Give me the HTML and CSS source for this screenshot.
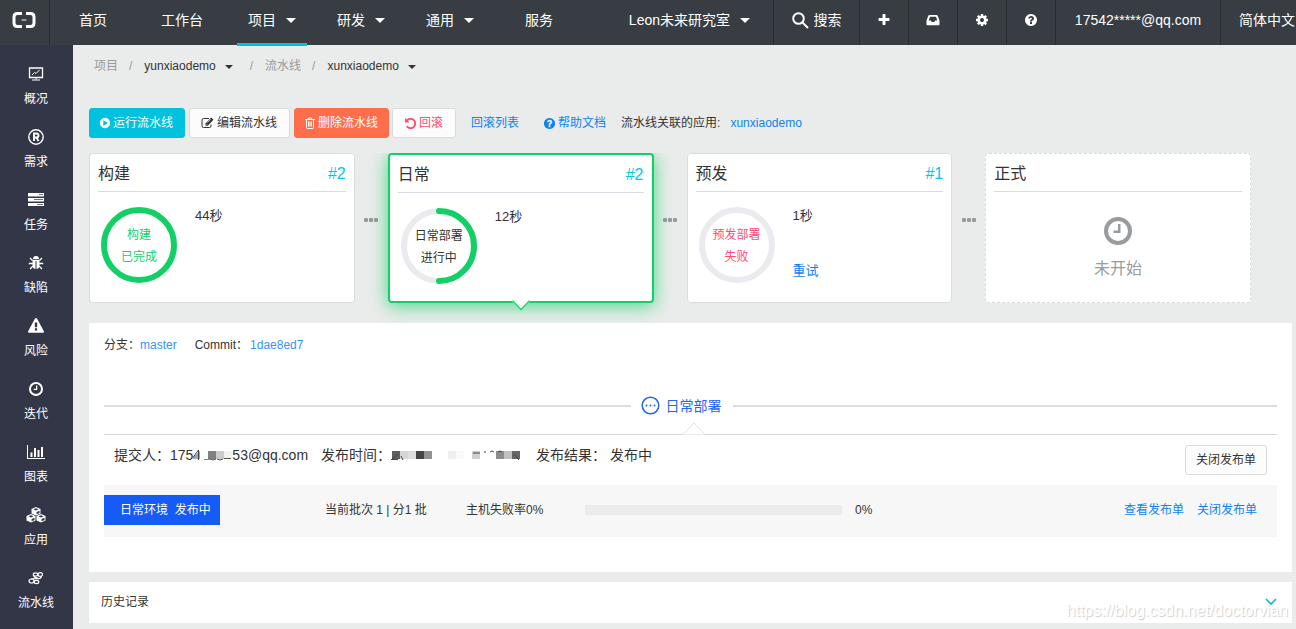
FILE: index.html
```html
<!DOCTYPE html>
<html lang="zh-CN">
<head>
<meta charset="utf-8">
<title>xunxiaodemo - 流水线</title>
<link rel="stylesheet" href="styles.css">
</head>
<body>
<svg class="defs" aria-hidden="true">
  <symbol id="i-question" viewBox="0 0 1792 1792"><path d="M1024 1376v-192q0-14-9-23t-23-9h-192q-14 0-23 9t-9 23v192q0 14 9 23t23 9h192q14 0 23-9t9-23zm256-672q0-88-55.5-163t-138.5-116-170-41q-243 0-371 213-15 24 8 42l132 100q7 6 19 6 16 0 25-12 53-68 86-92 34-24 86-24 48 0 85.5 26t37.5 59q0 38-20 61t-68 45q-63 28-115.5 86.5t-52.5 125.5v36q0 14 9 23t23 9h192q14 0 23-9t9-23q0-19 21.5-49.5t54.5-49.5q32-18 49-28.5t46-35 44.5-48 28-60.5 12.5-81zm384 192q0 209-103 385.5t-279.5 279.5-385.5 103-385.5-103-279.5-279.5-103-385.5 103-385.5 279.5-279.5 385.5-103 385.5 103 279.5 279.5 103 385.5z"/></symbol>
  <symbol id="i-clock" viewBox="0 0 28 28"><path fill-rule="evenodd" d="M14 0a14 14 0 1 0 0 28a14 14 0 1 0 0-28zM14 4a10 10 0 1 1 0 20a10 10 0 1 1 0-20z"/><path d="M14 7h2.500v9h-7v-2.500H14z"/></symbol>
</svg>

<header class="topbar">
  <a class="logo" href="#" aria-label="云效">
    <svg width="24" height="16" viewBox="0 0 24 16"><path fill="none" stroke="#fff" stroke-width="3" d="M10 1.500H5.500Q2 1.500 2 5v6q0 3.500 3.500 3.500H10M14 1.500h4.500Q22 1.500 22 5v6q0 3.500-3.500 3.500H14"/><path fill="#fff" d="M9.500 7.500h5v1h-5z"/></svg>
  </a>
  <nav class="nav">
    <a href="#">首页</a>
    <a href="#" class="nav-work">工作台</a>
    <a href="#" class="nav-project active">项目<i class="caret"></i></a>
    <a href="#" class="nav-group">研发<i class="caret"></i></a>
    <a href="#" class="nav-group">通用<i class="caret"></i></a>
    <a href="#" class="nav-service">服务</a>
  </nav>
  <div class="tools">
    <a href="#" class="org">Leon未来研究室<i class="caret"></i></a>
    <a href="#" class="tool search"><svg width="17" height="17" viewBox="0 0 17 17"><g fill="none" stroke="#fff" stroke-width="2"><circle cx="6.500" cy="6.500" r="5.300"/><path d="M10.500 10.500l5.500 5.500"/></g></svg>搜索</a>
    <a href="#" class="tool" aria-label="新建"><svg width="14" height="14" viewBox="0 0 1792 1792"><path fill="#fff" d="M1600 736v192q0 40-28 68t-68 28h-416v416q0 40-28 68t-68 28h-192q-40 0-68-28t-28-68v-416h-416q-40 0-68-28t-28-68v-192q0-40 28-68t68-28h416v-416q0-40 28-68t68-28h192q40 0 68 28t28 68v416h416q40 0 68 28t28 68z"/></svg></a>
    <a href="#" class="tool" aria-label="收件箱"><svg width="14" height="14" viewBox="0 0 14 14"><path fill="#fff" fill-rule="evenodd" d="M3.500 2h7q.9 0 1.200.7L13.500 7.500v4q0 .8-.8.800H1.300q-.8 0-.8-.8v-4L2.300 2.700Q2.600 2 3.500 2zM4 3.700L2.700 7.500h2.200l.8 1.500h2.600l.8-1.500h2.200L10 3.700z"/></svg></a>
    <a href="#" class="tool" aria-label="设置"><svg width="14" height="14" viewBox="0 0 1792 1792"><path fill="#fff" d="M1152 896q0-106-75-181t-181-75-181 75-75 181 75 181 181 75 181-75 75-181zm512-109v222q0 12-8 23t-20 13l-185 28q-19 54-39 91 35 50 107 138 10 12 10 25t-9 23q-27 37-99 108t-94 71q-12 0-26-9l-138-108q-44 23-91 38-16 136-29 186-7 28-36 28h-222q-14 0-24.500-8.500t-11.500-21.500l-28-184q-49-16-90-37l-141 107q-10 9-25 9-14 0-25-11-126-114-165-168-7-10-7-23 0-12 8-23 15-21 51-66.500t54-70.500q-27-50-41-99l-183-27q-13-2-21-12.500t-8-23.500v-222q0-12 8-23t19-13l186-28q14-46 39-92-40-57-107-138-10-12-10-24 0-10 9-23 26-36 98.500-107.500t94.500-71.500q13 0 26 10l138 107q44-23 91-38 16-136 29-186 7-28 36-28h222q14 0 24.500 8.500t11.500 21.500l28 184q49 16 90 37l142-107q9-9 24-9 13 0 25 10 129 119 165 170 7 8 7 22 0 12-8 23-15 21-51 66.500t-54 70.500q26 50 41 98l183 28q13 2 21 12.500t8 23.500z"/></svg></a>
    <a href="#" class="tool" aria-label="帮助"><svg width="14" height="14" fill="#fff"><use href="#i-question"/></svg></a>
    <a href="#" class="tool account">17542*****@qq.com</a>
    <a href="#" class="tool lang">简体中文</a>
  </div>
</header>

<div class="shell">
  <aside class="side">
    <a href="#"><span class="ico"><svg width="16" height="16" viewBox="0 0 16 16" fill="none" stroke="#fff"><path d="M1.500 2h13v9.500h-13z" stroke-width="1.300"/><path d="M4 9l2.500-2.500 1.500 1 3.500-3.500M8 11.500v2M4 14h8"/></svg></span>概况</a>
    <a href="#"><span class="ico"><svg width="16" height="16" viewBox="0 0 16 16" fill="none" stroke="#fff"><circle cx="8" cy="8" r="7.200" stroke-width="1.400"/><path d="M6 12V4.500h2.500a2 2 0 0 1 0 4H6M8.500 8.500l2 3.500" stroke-width="1.900"/></svg></span>需求</a>
    <a href="#"><span class="ico"><svg width="16" height="14" viewBox="0 0 16 14"><path fill="#fff" d="M0 0h16v3.500H0zM0 5h16v3.500H0zM0 10h16v3H0z"/><path fill="#333646" d="M11 1h4v1h-4zM6 6h9v1H6zM9 11h6v1H9z" opacity=".7"/></svg></span>任务</a>
    <a href="#"><span class="ico"><svg width="16" height="16" viewBox="0 0 16 16"><path fill="#fff" d="M5 4q0-3 3-3t3 3zM4.500 4.800h7V10q0 4-3.500 4t-3.500-4z"/><path d="M2 3l2.500 2.500M14 3l-2.500 2.500M.8 8.500h4M15.200 8.500h-4M2 14l3-3M14 14l-3-3" stroke="#fff" stroke-width="1.300"/><path d="M8 6v8" stroke="#333646"/></svg></span>缺陷</a>
    <a href="#"><span class="ico"><svg width="16" height="16" viewBox="0 0 1792 1792"><path fill="#fff" d="M1024 1375v-190q0-14-9.500-23.500t-22.500-9.500h-192q-13 0-22.500 9.500t-9.500 23.500v190q0 14 9.500 23.500t22.500 9.500h192q13 0 22.500-9.500t9.500-23.500zm-2-374l18-459q0-12-10-19-13-11-24-11h-220q-11 0-24 11-10 7-10 21l17 457q0 10 10 16.500t24 6.500h185q14 0 23.500-6.500t10.500-16.500zm-14-934l768 1408q35 63-2 126-17 29-46.500 46t-63.500 17h-1536q-34 0-63.500-17t-46.500-46q-37-63-2-126l768-1408q17-31 47-49t65-18 65 18 47 49z"/></svg></span>风险</a>
    <a href="#"><span class="ico"><svg width="14" height="14" fill="#fff"><use href="#i-clock"/></svg></span>迭代</a>
    <a href="#"><span class="ico"><svg width="18" height="16" viewBox="0 0 18 16" fill="#fff"><path d="M0 1h1v13h17v1H0zM3.500 8.500h2V13h-2zM7 4h2v9H7zM10.500 6h2v7h-2zM14 3h2v10h-2z"/></svg></span>图表</a>
    <a href="#"><span class="ico"><svg width="20" height="16" viewBox="0 0 20 16"><g fill="#fff"><path d="M10 0l4.500 2v4.500L10 8.500l-4.500-2V2zM5 7l4.500 2v4.500L5 15.500l-4.500-2V9zM15 7l4.500 2v4.500L15 15.500l-4.500-2V9z"/></g><g fill="#333646"><path d="M7.500 2.300L10 1.300l2.500 1L10 3.400zM2.500 9.300L5 8.300l2.500 1L5 10.400zM12.500 9.300l2.500-1 2.500 1-2.500 1.100zM10.600 5l2.900-1.300v2.200l-2.900 1.300zM5.600 12l2.900-1.300v2.200l-2.900 1.300zM15.600 12l2.900-1.300v2.200l-2.900 1.300z"/></g></svg></span>应用</a>
    <a href="#"><span class="ico"><svg width="16" height="16" viewBox="0 0 16 16" fill="none" stroke="#fff" stroke-width="1.200"><ellipse cx="7.500" cy="4.500" rx="2.200" ry="1.600"/><ellipse cx="12.300" cy="4.500" rx="2.200" ry="1.900"/><ellipse cx="3.500" cy="11" rx="2.500" ry="2"/><ellipse cx="8.500" cy="12" rx="2.300" ry="1.600"/><path d="M13.500 6.500q-1 3-6.500 2l-4 .5M6 6q0 2 4 2"/></svg></span>流水线</a>
  </aside>

  <main class="main">
    <nav class="crumbs">
      <a href="#">项目</a><span class="sep">/</span><a href="#" class="cur">yunxiaodemo<i class="caret small"></i></a><span class="sep wide">/</span><a href="#">流水线</a><span class="sep">/</span><a href="#" class="cur">xunxiaodemo<i class="caret small"></i></a>
    </nav>

    <div class="actions">
      <button class="btn run"><svg width="12" height="12" viewBox="0 0 1792 1792"><path fill="#fff" d="M896 128q209 0 385.500 103t279.500 279.500 103 385.500-103 385.500-279.500 279.500-385.500 103-385.500-103-279.500-279.500-103-385.500 103-385.500 279.500-279.500 385.500-103zm384 823q32-18 32-55t-32-55l-544-320q-31-19-64-1-32 19-32 56v640q0 37 32 56 16 8 32 8 17 0 32-9z"/></svg>运行流水线</button>
      <button class="btn edit"><svg width="13" height="12" viewBox="0 0 13 12"><path d="M8 1.500H2.500q-1.500 0-1.500 1.500v6q0 1.500 1.500 1.500h6q1.500 0 1.500-1.500V7.500" fill="none" stroke="#333"/><path fill="#333" d="M4.500 8.700V6.400L10.300.6l2.200 2.200-5.800 5.900z"/><path d="M5.200 6.800l1.200 1.200M6.500 5.500l3.200-3.200" stroke="#fff" stroke-width=".6"/></svg>编辑流水线</button>
      <button class="btn del"><svg width="10" height="12" viewBox="0 0 10 12" fill="none" stroke="#fff"><path d="M0 2.500h10M3 2.500L3.500 1h3L7 2.500M1.500 2.500v8q0 1 1 1h5q1 0 1-1v-8M3.500 4.500v5M5 4.500v5M6.500 4.500v5"/></svg>删除流水线</button>
      <button class="btn back"><svg width="13" height="13" viewBox="0 0 1792 1792"><path fill="#ff4c72" d="M1664 896q0 156-61 298t-164 245-245 164-298 61q-172 0-327-72.500t-264-204.500q-7-10-6.500-22.500t8.500-20.500l137-138q10-9 25-9 16 2 23 12 73 95 179 147t225 52q104 0 198.500-40.500t163.500-109.500 109.500-163.500 40.500-198.500-40.500-198.500-109.500-163.500-163.500-109.500-198.500-40.500q-98 0-188 35.500t-160 101.500l137 138q31 30 14 69-17 40-59 40h-448q-26 0-45-19t-19-45v-448q0-42 40-59 39-17 69 14l130 129q107-101 244.500-156.500t284.500-55.500q156 0 298 61t245 164 164 245 61 298z"/></svg>回滚</button>
      <a href="#" class="rollbacks">回滚列表</a>
      <a href="#" class="docs"><svg width="13" height="13" fill="#0c83f2"><use href="#i-question"/></svg>帮助文档</a>
      <span class="related">流水线关联的应用:</span>
      <a href="#">xunxiaodemo</a>
    </div>

    <section class="stages">
      <article class="stage">
        <div class="stage-head"><h2>构建</h2><a href="#">#2</a></div>
        <div class="stage-body">
          <div class="ring ok"><svg viewBox="0 0 76 76"><circle cx="38" cy="38" r="35"/></svg><div class="ring-text">构建<br>已完成</div></div>
          <div class="info"><span>44秒</span></div>
        </div>
      </article>
      <div class="link"><i></i><i></i><i></i></div>
      <article class="stage current">
        <div class="stage-head"><h2>日常</h2><a href="#">#2</a></div>
        <div class="stage-body">
          <div class="ring"><svg viewBox="0 0 76 76"><circle cx="38" cy="38" r="35"/><path d="M38 3a35 35 0 0 1 0 70"/></svg><div class="ring-text">日常部署<br>进行中</div></div>
          <div class="info"><span>12秒</span></div>
        </div>
        <svg class="tip" width="18" height="11" viewBox="0 0 18 11"><path d="M0 0h18v2h-1L9 10 1 2H0z" fill="#fff"/><path d="M0 1h1l8 8.500L17 1h1" fill="none" stroke="#13d066" stroke-width="1.200"/></svg>
      </article>
      <div class="link"><i></i><i></i><i></i></div>
      <article class="stage">
        <div class="stage-head"><h2>预发</h2><a href="#">#1</a></div>
        <div class="stage-body">
          <div class="ring fail"><svg viewBox="0 0 76 76"><circle cx="38" cy="38" r="35"/></svg><div class="ring-text">预发部署<br>失败</div></div>
          <div class="info"><span>1秒</span><a href="#">重试</a></div>
        </div>
      </article>
      <div class="link"><i></i><i></i><i></i></div>
      <article class="stage pending">
        <div class="stage-head"><h2>正式</h2></div>
        <div class="stage-wait"><svg width="28" height="28" fill="#989c9f"><use href="#i-clock"/></svg><span>未开始</span></div>
      </article>
    </section>

    <section class="panel">
      <div class="source">分支：<a href="#">master</a><span class="commit">Commit：</span><a href="#">1dae8ed7</a></div>
      <div class="divider"><span><svg width="19" height="19" viewBox="0 0 19 19"><circle cx="9.500" cy="9.500" r="8.300" fill="none" stroke="#2466ef" stroke-width="1.500"/><g fill="#2466ef"><circle cx="5.500" cy="9.500" r="1"/><circle cx="9.500" cy="9.500" r="1"/><circle cx="13.500" cy="9.500" r="1"/></g></svg>日常部署</span></div>
      <div class="order">
        <svg class="notch" width="22" height="13" viewBox="0 0 22 13"><path d="M0 12.500L11 1l11 11.500" fill="#fff" stroke="#e3e3e6"/></svg>
        <div class="meta">
          <span>提交人：175<svg class="mask" width="39" height="12" viewBox="0 0 39 12"><path fill="#a6a6a6" d="M0 7l7-6v8H0z"/><path fill="none" stroke="#444" d="M0 7.500L5.500 0v10"/><path fill="#888" d="M11 9h6v1h-6z"/><path fill="#808080" d="M15 1h8v8h-8z"/><path fill="#ccc" d="M23 1h8v8h-8z"/><path fill="#f2f2f2" d="M31 1h8v8h-8z"/><path fill="none" stroke="#555" d="M17 9q3 2 6 0M24 9q3 2 6 0M31 8.500h7"/></svg>53@qq.com</span>
          <span>发布时间：<svg class="mask" width="132" height="12" viewBox="0 0 132 12"><path fill="#606060" d="M1 1h8v8H1z"/><path fill="#d6d6d6" d="M9 1h8v8H9z"/><path fill="#dedede" d="M17 1h8v8h-8z"/><path fill="#454545" d="M25 1h8v8h-8z"/><path fill="#929292" d="M33 1h8v8h-8z"/><path fill="#eee" d="M57 1h8v8h-8z"/><path fill="#f9f9f9" d="M65 1h8v8h-8z"/><path fill="#d0d0d0" d="M81 1h8v8h-8z"/><path fill="#8c8c8c" d="M105 1h8v8h-8z"/><path fill="#c0c0c0" d="M113 1h8v8h-8z"/><path fill="#666" d="M121 1h8v8h-8z"/><path fill="none" stroke="#444" d="M0 9.500h7M1 9l6-5M10 6l2 4M82 3h7M93 2h2M99 2q2-2 4 0M107 2q2-2 4 0M123 4l5 6"/></svg></span>
          <span class="result">发布结果： 发布中</span>
          <button class="btn close">关闭发布单</button>
        </div>
        <div class="batch">
          <span class="env">日常环境&nbsp; 发布中</span>
          <span class="step">当前批次 1 | 分1 批</span>
          <span class="rate">主机失败率0%</span>
          <div class="bar"></div>
          <span class="pct">0%</span>
          <a href="#">查看发布单</a>
          <a href="#">关闭发布单</a>
        </div>
      </div>
    </section>

    <section class="history">
      <span>历史记录</span>
      <button class="toggle" aria-label="展开"><svg width="12" height="8" viewBox="0 0 12 8"><path d="M1 1l5 5 5-5" fill="none" stroke="#0fbad2" stroke-width="1.700"/></svg></button>
    </section>
  </main>
</div>
<div class="watermark">https://blog.csdn.net/doctorvian</div>
</body>
</html>
```

FILE: styles.css
```css
* { box-sizing: border-box; }

body {
  margin: 0;
  min-height: 100vh;
  display: flex;
  flex-direction: column;
  overflow: hidden;
  background: #eaeceb;
  color: #333;
  font: 12px/18px "Liberation Sans", "Noto Sans CJK SC", sans-serif;
}

a { color: #0c83f2; text-decoration: none; }
svg { flex: none; }
.defs { display: none; }

/* top bar */
.topbar {
  display: flex;
  height: 45px;
  flex: none;
  background: #373d43;
  font-size: 14px;
  line-height: 40px;
}
.topbar a { color: #fff; white-space: nowrap; }
.logo {
  width: 50px;
  flex: none;
  display: flex;
  justify-content: center;
  padding: 12px 2px 0 0;
  border-right: 1px solid #282c31;
}
.nav { display: flex; padding-left: 18px; }
.nav a, .org {
  display: flex;
  align-items: center;
  height: 40px;
  padding: 0 11px;
}
.nav-work { margin-left: 32px; }
.nav-project { margin-left: 23px; }
.nav-group { margin-left: 19px; }
.nav-service { margin-left: 29px; }
.nav .active {
  position: relative;
}
.nav .active::after {
  content: "";
  position: absolute;
  left: 0;
  right: 0;
  top: 43px;
  height: 3px;
  background: #00c1de;
}
.caret {
  display: inline-block;
  margin-left: 10px;
  border: 5px solid transparent;
  border-top-color: currentColor;
  border-bottom: 0;
}
.caret.small {
  margin-left: 9px;
  border-width: 4px 4px 0;
  vertical-align: 1px;
}
.tools { display: flex; margin-left: auto; }
.org { margin-right: 12px; }
.tool {
  display: flex;
  justify-content: center;
  align-items: center;
  width: 49px;
  padding-bottom: 5px;
  border-left: 1px solid #282c31;
}
.tool.search { width: 86px; gap: 5px; }
.tool.account { width: 165px; }
.tool.lang { width: 76px; padding-left: 18px; justify-content: flex-start; }

/* side menu */
.shell { display: flex; flex: 1; }
.side {
  width: 73px;
  flex: none;
  padding-top: 17px;
  background: #333646;
}
.side a {
  display: flex;
  flex-direction: column;
  align-items: center;
  height: 63px;
  padding-right: 1px;
  color: #fff;
}
.ico {
  height: 28px;
  padding-bottom: 5px;
  display: flex;
  align-items: center;
}

/* content */
.main { flex: 1; min-width: 0; padding: 12px 4px 6px 16px; }
.crumbs { display: flex; padding-left: 5px; }
.crumbs a { color: #999; }
.crumbs .cur { color: #333; }
.sep { margin: 0 12px 0 11px; color: #999; }
.sep.wide { margin-left: 17px; }

.actions { display: flex; align-items: center; padding: 33px 0 15px; }
.btn {
  display: flex;
  align-items: center;
  justify-content: center;
  gap: 3px;
  height: 30px;
  padding: 0 10px;
  border: 1px solid #dadcdc;
  border-radius: 3px;
  background: #fcfcfc;
  color: #333;
  font: inherit;
  white-space: nowrap;
}
.run { gap: 2px; margin-right: 4px; padding: 0 11px 0 9px; background: #00c1de; border-color: #00c1de; color: #fff; }
.edit { margin-right: 4px; padding: 0 12px 0 11px; }
.del { margin-right: 3px; background: #ff6e4a; border-color: #ff6e4a; color: #fff; }
.back { gap: 2px; padding: 0 12px 0 11px; color: #ff4c72; }
.rollbacks { margin-left: 15px; }
.docs { display: flex; align-items: center; gap: 2px; margin-left: 24px; }
.related { margin: 0 10px 0 15px; }

/* stages */
.stages {
  display: grid;
  grid-template-columns: 1fr 33px 1fr 33px 1fr 33px 1fr;
  padding: 0 41px 20px 0;
  overflow: hidden;
}
.stage {
  padding: 0 8px;
  border: 1px solid #dadde2;
  border-radius: 4px;
  background: #fff;
}
.stage.current {
  position: relative;
  border: 2px solid #13d066;
  box-shadow: 0 3px 18px rgba(19, 208, 102, 0.75);
}
.stage.pending { border: 1px dashed #dadcdc; }
.stage-head {
  display: flex;
  justify-content: space-between;
  height: 38px;
  border-bottom: 1px solid #dadbe2;
  font-size: 16px;
  line-height: 39px;
}
.stage-head h2 { margin: 0; font-size: 16px; font-weight: 400; }
.stage-head a { color: #00c8ea; }
.stage-body { display: flex; gap: 18px; padding: 15px 3px 19px; }
.current .stage-body { padding-bottom: 17px; }
.ring {
  display: grid;
  place-items: center;
}
.ring > * { grid-area: 1 / 1; }
.ring svg { width: 76px; height: 76px; }
.ring-text { padding-top: 2px; line-height: 22px; text-align: center; }
.ring circle { fill: none; stroke: #eaebef; stroke-width: 6; }
.ring path { fill: none; stroke: #13d066; stroke-width: 6; stroke-linecap: round; }
.ring.ok { color: #13d066; }
.ring.ok circle { stroke: #13d066; }
.ring.fail { color: #ff4c72; }
.info { display: flex; flex-direction: column; gap: 37px; font-size: 13px; }
.tip { position: absolute; left: 50%; bottom: -10px; margin-left: -9px; }
.stage-wait {
  display: flex;
  flex-direction: column;
  align-items: center;
  gap: 14px;
  padding-top: 25px;
  color: #989c9f;
  font-size: 16px;
  line-height: 20px;
}
.link {
  display: flex;
  justify-content: center;
  align-items: center;
  gap: 1px;
  padding-bottom: 17px;
}
.link i { width: 4px; height: 4px; border-radius: 1px; background: #989a9b; }

/* details */
.panel { padding: 13px 15px 35px; background: #fff; }
.source a { color: #3296fa; }
.commit { margin: 0 2px 0 18px; }
.divider {
  display: flex;
  align-items: center;
  padding: 42px 0 18px;
  color: #2466ef;
  font-size: 14px;
  line-height: 20px;
}
.divider::before, .divider::after { content: ""; flex: 1; height: 2px; background: #dcdde3; }
.divider::after { flex-basis: 18px; }
.divider span { display: flex; gap: 6px; padding: 0 11px 0 10px; }
.order { position: relative; border-top: 1px solid #d6d6d9; }
.notch { position: absolute; left: 50%; top: -13px; margin-left: -8px; }
.meta {
  display: flex;
  align-items: flex-start;
  gap: 13px;
  padding: 10px;
  font-size: 14px;
  line-height: 20px;
}
.mask { vertical-align: -2px; }
.close { margin-left: auto; font-size: 12px; }
.batch {
  display: flex;
  align-items: center;
  gap: 13px;
  height: 52px;
  padding: 0 20px 2px 0;
  background: #f7f7f7;
}
.env {
  width: 116px;
  padding-left: 16px;
  background: #155bf5;
  color: #fff;
  line-height: 30px;
}
.step { width: 128px; margin-left: 92px; }
.rate { width: 106px; }
.bar { flex: 1; height: 10px; background: #eaeceb; }
.pct { width: 256px; }

.history {
  display: flex;
  align-items: center;
  justify-content: space-between;
  height: 41px;
  margin-top: 10px;
  padding: 0 15px 2px 12px;
  background: #fff;
}
.toggle { display: flex; padding: 0; border: 0; background: none; }

.watermark {
  position: absolute;
  right: 8px;
  bottom: 8px;
  color: #fff;
  font-size: 16px;
  line-height: 20px;
  text-shadow: 1px 1px 1px #ccc;
}
```
